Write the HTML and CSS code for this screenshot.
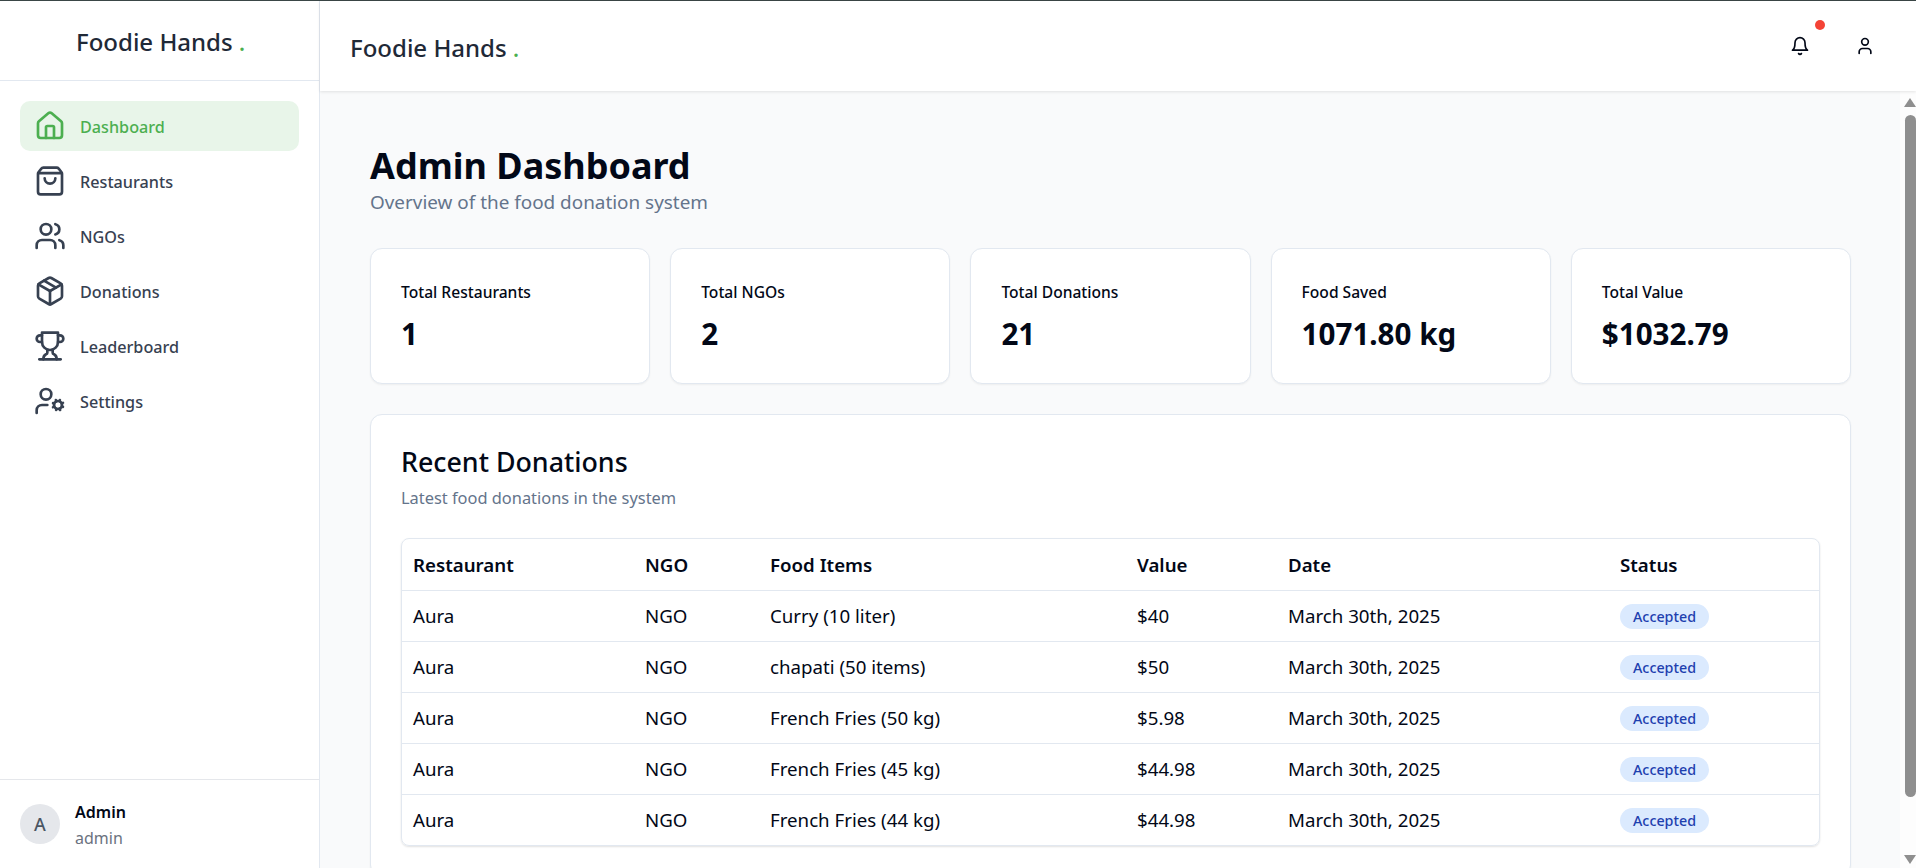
FILE: index.html
```html
<!doctype html>
<html lang="en">
<head>
<meta charset="UTF-8">
<title>Foodie Hands</title>
<link rel="stylesheet" href="styles.css">
</head>
<body>
<div class="app">
	<aside class="sidebar">
		<div class="side-logo"><span class="logo-text">Foodie Hands<span class="dot">.</span></span></div>
		<nav class="nav">
			<a class="nav-item active">
				<svg class="nav-icon" viewBox="0 0 24 24"><path d="M15 21v-8a1 1 0 0 0-1-1h-4a1 1 0 0 0-1 1v8"/><path d="M3 10a2 2 0 0 1 .709-1.528l7-5.999a2 2 0 0 1 2.582 0l7 5.999A2 2 0 0 1 21 10v9a2 2 0 0 1-2 2H5a2 2 0 0 1-2-2z"/></svg>
				<span class="nav-label">Dashboard</span>
			</a>
			<a class="nav-item">
				<svg class="nav-icon" viewBox="0 0 24 24"><path d="M16 10a4 4 0 0 1-8 0"/><path d="M3.103 6.034h17.794"/><path d="M3.4 5.467a2 2 0 0 0-.4 1.2V20a2 2 0 0 0 2 2h14a2 2 0 0 0 2-2V6.667a2 2 0 0 0-.4-1.2l-2.1-2.8A2 2 0 0 0 17 2H7a2 2 0 0 0-1.6.8z"/></svg>
				<span class="nav-label">Restaurants</span>
			</a>
			<a class="nav-item">
				<svg class="nav-icon" viewBox="0 0 24 24"><path d="M16 21v-2a4 4 0 0 0-4-4H6a4 4 0 0 0-4 4v2"/><circle cx="9" cy="7" r="4"/><path d="M22 21v-2a4 4 0 0 0-3-3.87"/><path d="M16 3.13a4 4 0 0 1 0 7.75"/></svg>
				<span class="nav-label">NGOs</span>
			</a>
			<a class="nav-item">
				<svg class="nav-icon" viewBox="0 0 24 24"><path d="M21 8a2 2 0 0 0-1-1.73l-7-4a2 2 0 0 0-2 0l-7 4A2 2 0 0 0 3 8v8a2 2 0 0 0 1 1.73l7 4a2 2 0 0 0 2 0l7-4A2 2 0 0 0 21 16Z"/><path d="m7.5 4.27 9 5.15"/><path d="m3.3 7 8.7 5 8.7-5"/><path d="M12 22V12"/></svg>
				<span class="nav-label">Donations</span>
			</a>
			<a class="nav-item">
				<svg class="nav-icon" viewBox="0 0 24 24"><path d="M6 9H4.5a2.5 2.5 0 0 1 0-5H6"/><path d="M18 9h1.5a2.5 2.5 0 0 0 0-5H18"/><path d="M4 22h16"/><path d="M10 14.66V17c0 .55-.47.98-.97 1.21C7.85 18.75 7 20.24 7 22"/><path d="M14 14.66V17c0 .55.47.98.97 1.21C16.15 18.75 17 20.24 17 22"/><path d="M18 2H6v7a6 6 0 0 0 12 0V2Z"/></svg>
				<span class="nav-label">Leaderboard</span>
			</a>
			<a class="nav-item">
				<svg class="nav-icon" viewBox="0 0 24 24"><circle cx="18" cy="15" r="3"/><circle cx="9" cy="7" r="4"/><path d="M10 15H6a4 4 0 0 0-4 4v2"/><path d="m21.7 16.4-.9-.3"/><path d="m15.2 13.9-.9-.3"/><path d="m16.6 18.7.3-.9"/><path d="m19.1 12.2.3-.9"/><path d="m19.6 18.7-.4-1"/><path d="m16.8 12.3-.4-1"/><path d="m14.3 16.6 1-.4"/><path d="m20.7 13.8 1-.4"/></svg>
				<span class="nav-label">Settings</span>
			</a>
		</nav>
		<div class="side-user">
			<div class="avatar">A</div>
			<div class="user-info">
				<div class="user-name">Admin</div>
				<div class="user-role">admin</div>
			</div>
		</div>
	</aside>

	<div class="main">
		<header class="topbar">
			<span class="logo-text">Foodie Hands<span class="dot">.</span></span>
			<div class="top-icons">
				<div class="bell">
					<svg class="top-icon" viewBox="0 0 24 24"><path d="M6 8a6 6 0 0 1 12 0c0 7 3 9 3 9H3s3-2 3-9"/><path d="M10.3 21a1.94 1.94 0 0 0 3.4 0"/></svg>
					<span class="badge"></span>
				</div>
				<svg class="top-icon" viewBox="0 0 24 24"><path d="M19 21v-2a4 4 0 0 0-4-4H9a4 4 0 0 0-4 4v2"/><circle cx="12" cy="7" r="4"/></svg>
			</div>
		</header>

		<div class="body-row">
			<main class="content">
				<h1 class="title">Admin Dashboard</h1>
				<p class="subtitle">Overview of the food donation system</p>

				<div class="stats">
					<div class="stat"><div class="stat-label">Total Restaurants</div><div class="stat-value">1</div></div>
					<div class="stat"><div class="stat-label">Total NGOs</div><div class="stat-value">2</div></div>
					<div class="stat"><div class="stat-label">Total Donations</div><div class="stat-value">21</div></div>
					<div class="stat"><div class="stat-label">Food Saved</div><div class="stat-value">1071.80 kg</div></div>
					<div class="stat"><div class="stat-label">Total Value</div><div class="stat-value">$1032.79</div></div>
				</div>

				<section class="panel">
					<h2 class="panel-title">Recent Donations</h2>
					<p class="panel-sub">Latest food donations in the system</p>
					<div class="table-wrap">
						<table class="table">
							<colgroup>
								<col class="c1"><col class="c2"><col class="c3"><col class="c4"><col class="c5"><col class="c6">
							</colgroup>
							<thead>
								<tr><th>Restaurant</th><th>NGO</th><th>Food Items</th><th>Value</th><th>Date</th><th>Status</th></tr>
							</thead>
							<tbody>
								<tr><td>Aura</td><td>NGO</td><td>Curry (10 liter)</td><td>$40</td><td>March 30th, 2025</td><td><span class="pill">Accepted</span></td></tr>
								<tr><td>Aura</td><td>NGO</td><td>chapati (50 items)</td><td>$50</td><td>March 30th, 2025</td><td><span class="pill">Accepted</span></td></tr>
								<tr><td>Aura</td><td>NGO</td><td>French Fries (50 kg)</td><td>$5.98</td><td>March 30th, 2025</td><td><span class="pill">Accepted</span></td></tr>
								<tr><td>Aura</td><td>NGO</td><td>French Fries (45 kg)</td><td>$44.98</td><td>March 30th, 2025</td><td><span class="pill">Accepted</span></td></tr>
								<tr><td>Aura</td><td>NGO</td><td>French Fries (44 kg)</td><td>$44.98</td><td>March 30th, 2025</td><td><span class="pill">Accepted</span></td></tr>
							</tbody>
						</table>
					</div>
				</section>
			</main>
			<div class="scrollbar">
				<span class="arrow-up"></span>
				<span class="thumb"></span>
				<span class="arrow-down"></span>
			</div>
		</div>
	</div>
</div>
</body>
</html>
```

FILE: styles.css
```css
* { box-sizing: border-box; }
html, body { height: 100%; }
body { margin: 0; font-family: "Noto Sans", "Open Sans", sans-serif; color: #020817; background: #f9fafb; overflow: hidden; }

.app { display: flex; height: 868px; border-top: 1px solid #3a4646; }

/* sidebar */
.sidebar { width: 320px; flex: none; display: flex; flex-direction: column; background: #fff; border-right: 1px solid #e2e8f0; }
.side-logo { height: 80px; flex: none; display: flex; align-items: center; padding: 2px 0 0 76px; border-bottom: 1px solid #e2e8f0; }
.logo-text { font-size: 24px; font-weight: 500; color: #1f2937; white-space: pre; }
.dot { margin-left: 6px; color: #4caf50; font-size: 24px; }

.nav { flex: 1; padding: 20px 20px 0 20px; display: flex; flex-direction: column; gap: 5px; }
.nav-item { height: 50px; display: flex; align-items: center; gap: 14px; padding-left: 14px; border-radius: 10px; font-size: 16.2px; font-weight: 500; color: #374151; }
.nav-item.active { background: #e8f5e9; color: #4caf50; }
.nav-icon { width: 32px; height: 32px; flex: none; fill: none; stroke: currentColor; stroke-width: 2; stroke-linecap: round; stroke-linejoin: round; }
.nav-label { padding-top: 2px; }

.side-user { height: 89px; flex: none; display: flex; align-items: center; gap: 15px; padding-left: 20px; border-top: 1px solid #e5e7eb; }
.avatar { width: 40px; height: 40px; border-radius: 50%; background: #e5e7eb; color: #4b5563; display: flex; align-items: center; justify-content: center; font-size: 18px; font-weight: 500; }
.user-info { padding-top: 2px; }
.user-name { font-size: 16px; font-weight: 600; line-height: 26px; color: #020817; }
.user-role { font-size: 16px; line-height: 26px; color: #6b7280; }

/* top bar */
.main { flex: 1; min-width: 0; display: flex; flex-direction: column; }
.topbar { height: 90px; flex: none; display: flex; align-items: center; justify-content: space-between; padding: 0 41px 0 30px; background: #fff; box-shadow: 0 1px 3px rgba(0, 0, 0, .1); position: relative; }
.topbar .logo-text { padding-top: 3px; }
.top-icons { display: flex; align-items: center; gap: 45px; padding-bottom: 1px; }
.top-icon { width: 20px; height: 20px; display: block; fill: none; stroke: #020817; stroke-width: 2; stroke-linecap: round; stroke-linejoin: round; }
.bell { position: relative; }
.badge { position: absolute; left: 25px; top: -16px; width: 10px; height: 10px; border-radius: 50%; background: #f44336; }

/* content */
.body-row { flex: 1; min-height: 0; display: flex; }
.content { flex: 1; min-width: 0; overflow: hidden; padding: 51px 49px 0 50px; }
.title { margin: 0; font-size: 36px; font-weight: 700; line-height: 47px; color: #020817; }
.subtitle { margin: 0 0 33px 0; font-size: 18.9px; line-height: 26px; color: #64748b; }

.stats { display: grid; grid-template-columns: repeat(5, 1fr); gap: 20px; margin-bottom: 30px; }
.stat { height: 136px; padding: 31px 30px 0 30px; background: #fff; border: 1px solid #e2e8f0; border-radius: 12px; box-shadow: 0 1px 2px rgba(0, 0, 0, .05); }
.stat-label { font-size: 15.6px; font-weight: 500; line-height: 24px; color: #020817; }
.stat-value { margin-top: 10px; font-size: 29.6px; font-weight: 700; line-height: 40px; color: #020817; }

.panel { padding: 29px 30px 30px 30px; background: #fff; border: 1px solid #e2e8f0; border-radius: 12px; box-shadow: 0 1px 2px rgba(0, 0, 0, .05); }
.panel-title { margin: 0; font-size: 26.8px; font-weight: 500; line-height: 36px; color: #020817; }
.panel-sub { margin: 6px 0 28px 0; font-size: 16.4px; line-height: 24px; color: #64748b; }

.table-wrap { border: 1px solid #e2e8f0; border-radius: 8px; box-shadow: 0 1px 2px rgba(0, 0, 0, .12); overflow: hidden; }
.table { width: 100%; border-collapse: collapse; table-layout: fixed; font-size: 18.7px; }
.c1 { width: 232px; }
.c2 { width: 125px; }
.c3 { width: 367px; }
.c4 { width: 151px; }
.c5 { width: 332px; }
th { height: 51px; padding: 0 10px 0 11px; text-align: left; font-weight: 600; color: #020817; border-bottom: 1px solid #e2e8f0; }
td { height: 51px; padding: 0 10px 0 11px; color: #020817; border-bottom: 1px solid #e2e8f0; }
tbody tr:last-child td { border-bottom: none; }
.pill { display: inline-block; padding: 0 13px; height: 25px; line-height: 25px; border-radius: 13px; background: #dbeafe; color: #1e40af; font-size: 14.3px; font-weight: 500; vertical-align: middle; }

/* scrollbar drawn by hand, headless has none */
.scrollbar { width: 16px; flex: none; display: flex; flex-direction: column; align-items: flex-end; padding-top: 7px; background: #fdfdfd; }
.arrow-up { width: 0; height: 0; border: 6px solid transparent; border-top: none; border-bottom: 9px solid #8f8f8f; }
.thumb { width: 11px; height: 682px; margin-top: 8px; border-radius: 6px; background: #8f8f8f; }
.arrow-down { width: 0; height: 0; margin-top: 58px; border: 6px solid transparent; border-bottom: none; border-top: 9px solid #8f8f8f; }
```
